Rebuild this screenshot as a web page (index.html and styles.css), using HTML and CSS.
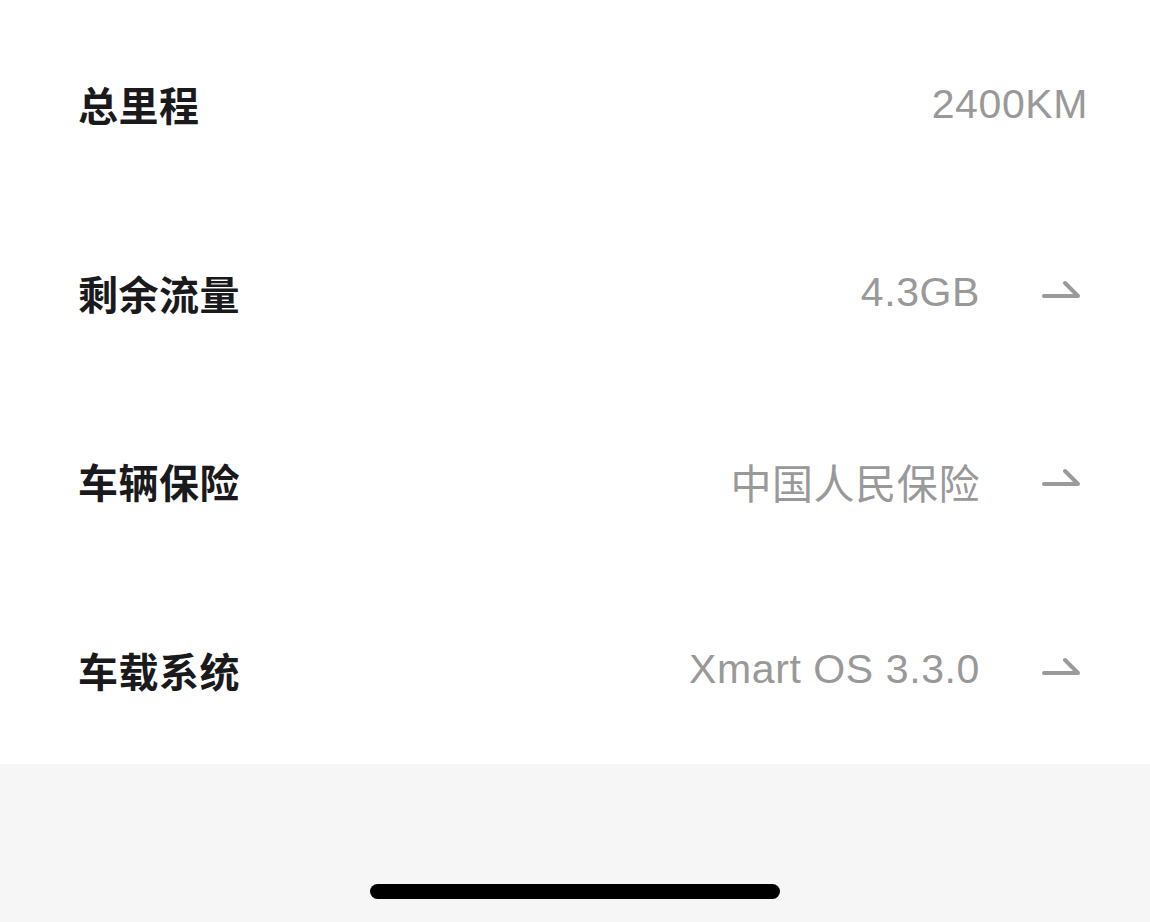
FILE: index.html
```html
<!DOCTYPE html>
<html lang="zh-CN">
<head>
    <meta charset="UTF-8">
    <meta name="viewport" content="width=device-width, initial-scale=1.0">
    <title>车辆信息</title>
    <link rel="stylesheet" href="styles.css">
</head>
<body>
    <div class="lista">
        <div class="linha">
            <span class="rotulo">总里程</span>
            <span class="valor">2400KM</span>
        </div>
        <div class="linha">
            <span class="rotulo">剩余流量</span>
            <span class="valor">4.3GB</span>
            <svg class="seta" viewBox="0 0 48 30"><path d="M4 18 H38 L25 5"/></svg>
        </div>
        <div class="linha">
            <span class="rotulo">车辆保险</span>
            <span class="valor">中国人民保险</span>
            <svg class="seta" viewBox="0 0 48 30"><path d="M4 18 H38 L25 5"/></svg>
        </div>
        <div class="linha">
            <span class="rotulo">车载系统</span>
            <span class="valor">Xmart OS 3.3.0</span>
            <svg class="seta" viewBox="0 0 48 30"><path d="M4 18 H38 L25 5"/></svg>
        </div>
    </div>
    <div class="rodape">
        <div class="barra"></div>
    </div>
</body>
</html>
```

FILE: styles.css
```css
body {
    margin: 0;
    padding: 0;
    background-color: #fff;
    font-family: "Liberation Sans", "Noto Sans CJK SC", sans-serif;
    height: 922px;
    display: flex;
    flex-direction: column;
}
.lista {
    padding: 10px 62px 0 78px;
}
.linha {
    height: 188.5px;
    display: flex;
    align-items: center;
}
.rotulo {
    flex: 1;
    font-family: "Noto Sans CJK SC", sans-serif;
    font-weight: 700;
    font-size: 40px;
    letter-spacing: 0.5px;
    color: #1a1a1c;
}
.valor {
    font-size: 41px;
    letter-spacing: 0.6px;
    color: #999;
}
.seta {
    width: 48px;
    height: 30px;
    margin-left: 60px;
    fill: none;
    stroke: #9a9a9a;
    stroke-width: 4;
    stroke-linecap: round;
    stroke-linejoin: round;
}
.rodape {
    flex: 1;
    background-color: #f6f6f6;
    display: flex;
    justify-content: center;
    align-items: flex-end;
    padding-bottom: 23px;
}
.barra {
    width: 410px;
    height: 15px;
    border-radius: 8px;
    background-color: #000;
}
```
